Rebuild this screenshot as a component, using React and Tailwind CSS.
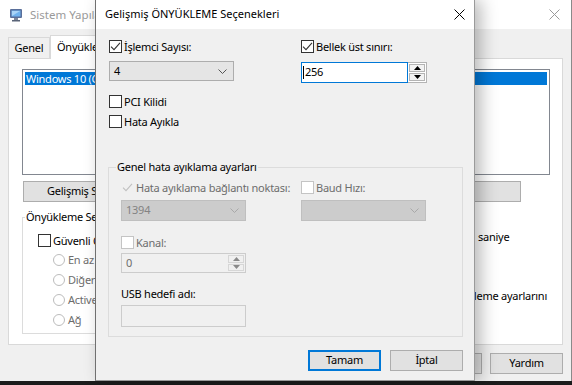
import React from 'react';

function Check({ checked, disabled }) {
  const box = disabled
    ? checked
      ? 'border-[#f0f0f0] bg-[#f0f0f0]'
      : 'border-[#c4c4c4] bg-white'
    : 'border-[#333333] bg-white';
  return (
    <span className={`w-[13px] h-[13px] border flex items-center justify-center shrink-0 ${box}`}>
      {checked && (
        <svg width="11" height="11" viewBox="0 0 11 11">
          <path d="M1 5.6 L4 8.6 L10 1.8" stroke={disabled ? '#c0c0c0' : '#333333'} strokeWidth="1.1" fill="none" />
        </svg>
      )}
    </span>
  );
}

function CheckRow({ label, checked, disabled, className = '' }) {
  return (
    <div className={`flex items-center h-[13px] gap-[2px] ${className}`}>
      <Check checked={checked} disabled={disabled} />
      <span className={`leading-[13px] whitespace-nowrap ${disabled ? 'text-[#6d6d6d]' : 'text-black'}`}>{label}</span>
    </div>
  );
}

function Chevron({ color }) {
  return (
    <svg width="9" height="5" viewBox="0 0 9 5">
      <path d="M0.5 0.5 L4.5 4.5 L8.5 0.5" stroke={color} strokeWidth="1" fill="none" />
    </svg>
  );
}

function Combo({ value, disabled, className = '' }) {
  return (
    <div
      className={`flex items-center justify-between border pl-[4px] pr-[6px] ${
        disabled ? 'bg-[#cccccc] border-[#bfbfbf] text-[#838383]' : 'bg-[#e5e5e5] border-[#adadad] text-black'
      } ${className}`}
    >
      <span>{value}</span>
      <Chevron color={disabled ? '#a8a8a8' : '#555555'} />
    </div>
  );
}

function Arrow({ up, color }) {
  return (
    <svg width="7" height="4" viewBox="0 0 7 4">
      <path d={up ? 'M0 4 L3.5 0 L7 4 Z' : 'M0 0 L3.5 4 L7 0 Z'} fill={color} />
    </svg>
  );
}

function Spinner({ disabled }) {
  const color = disabled ? '#8a8a8a' : '#000000';
  const part = disabled ? 'border-[#d6d6d6] bg-[#f0f0f0]' : 'border-[#b4b4b4] bg-[#f3f3f3]';
  return (
    <div className="w-[18px] flex flex-col gap-[1px] p-[1px]">
      <div className={`flex-1 border flex items-center justify-center ${part}`}>
        <Arrow up color={color} />
      </div>
      <div className={`flex-1 border flex items-center justify-center ${part}`}>
        <Arrow color={color} />
      </div>
    </div>
  );
}

function Btn({ label, primary, className = '' }) {
  return (
    <div
      className={`h-[21px] w-[73px] flex items-center justify-center bg-[#e1e1e1] text-black ${
        primary ? 'border-2 border-[#0078d7]' : 'border border-[#adadad]'
      } ${className}`}
    >
      {label}
    </div>
  );
}

function Radio({ label }) {
  return (
    <div className="flex items-center h-[13px] gap-[3px]">
      <span className="w-[12px] h-[12px] rounded-full border border-[#bcbcbc] bg-white shrink-0" />
      <span className="text-[#6d6d6d] leading-[13px] whitespace-nowrap">{label}</span>
    </div>
  );
}

function MonitorIcon() {
  return (
    <svg width="14" height="14" viewBox="0 0 14 14">
      <rect x="1" y="1" width="12" height="9" rx="1" fill="#5a6f9a" />
      <rect x="2.5" y="2.5" width="9" height="6" fill="#6fb2ee" />
      <path d="M3 3 L11 3 L3 8 Z" fill="#a9d4f7" />
      <rect x="5" y="10" width="4" height="2" fill="#7d8799" />
      <rect x="3" y="12" width="8" height="1.5" fill="#5a6478" />
    </svg>
  );
}

function CloseX({ color }) {
  return (
    <svg width="11" height="11" viewBox="0 0 11 11">
      <path d="M0.5 0.5 L10.5 10.5 M10.5 0.5 L0.5 10.5" stroke={color} strokeWidth="1" />
    </svg>
  );
}

export default function App() {
  return (
    <div className="w-[572px] h-[385px] bg-[#1c1c1c] relative overflow-hidden font-['Noto_Sans',sans-serif] text-[11px] tracking-[-0.25px]">
      {/* background window: Sistem Yapılandırması */}
      <div className="w-[572px] h-[381px] bg-[#f0f0f0] border-r border-[#8a8a8a] flex flex-col">
        <div className="h-[29px] bg-white flex items-center shrink-0">
          <div className="ml-[9px] mr-[7px]">
            <MonitorIcon />
          </div>
          <span className="text-[11.5px] tracking-normal text-[#9a9a9a]">Sistem Yapılandırması</span>
          <div className="ml-auto mr-[11px]">
            <CloseX color="#9a9a9a" />
          </div>
        </div>

        <div className="flex items-end pl-[8px] mt-[6px] h-[23px]">
          <div className="w-[42px] h-[21px] border border-b-0 border-[#d9d9d9] flex items-center justify-center">Genel</div>
          <div className="relative w-[78px] h-[24px] -mb-[1px] bg-white border border-b-0 border-[#d9d9d9] flex items-center pl-[6px]">
            Önyükleme
          </div>
        </div>

        <div className="ml-[8px] mr-[8px] h-[287px] bg-white border border-[#d9d9d9] flex flex-col">
          <div className="ml-[13px] mt-[10px] w-[528px] h-[106px] border border-[#828790] p-[2px]">
            <div className="h-[13px] bg-[#0078d7] text-white leading-[13px] pl-[1px] whitespace-nowrap overflow-hidden">
              Windows 10 (C:\WINDOWS) : Geçerli işletim sistemi; Varsayılan işletim sistemi
            </div>
          </div>

          <div className="flex ml-[14px] mt-[6px] gap-[8px]">
            <div className="w-[150px] h-[21px] bg-[#e1e1e1] border border-[#adadad] flex items-center pl-[23px] whitespace-nowrap">
              Gelişmiş Seçenekler...
            </div>
            <div className="w-[192px] h-[21px] bg-[#e1e1e1] border border-[#adadad] flex items-center justify-center whitespace-nowrap">
              Varsayılan olarak ayarla
            </div>
            <div className="w-[140px] h-[21px] bg-[#e1e1e1] border border-[#adadad] flex items-center justify-center">Sil</div>
          </div>

          <div className="flex mt-[15px]">
            <div className="ml-[13px] w-[280px] h-[117px] border border-[#dcdcdc] flex flex-col shrink-0">
              <span className="-mt-[9px] ml-[2px] px-[1px] bg-white w-fit leading-[16px]">Önyükleme Seçenekleri</span>
              <div className="ml-[15px] mt-[9px] flex flex-col">
                <CheckRow label="Güvenli Önyükleme" />
                <div className="ml-[15px] mt-[6px] flex flex-col gap-[7px]">
                  <Radio label="En az" />
                  <Radio label="Diğer kabuk" />
                  <Radio label="Active Directory onarımı" />
                  <Radio label="Ağ" />
                </div>
              </div>
            </div>
            <div className="ml-[18px] w-[228px] flex flex-col">
              <div className="mt-[10px] flex items-center h-[20px] leading-[16px]">
                <span className="w-[78px]">Zaman aşımı:</span>
                <span className="ml-[4px] w-[69px] h-[20px] border border-[#7a7a7a] bg-white pl-[3px]">30</span>
                <span className="ml-[7px]">saniye</span>
              </div>
              <div className="mt-[41px] leading-[16px] text-right pr-[1px] whitespace-nowrap">Tüm önyükleme ayarlarını</div>
              <div className="leading-[16px] pl-[60px] whitespace-nowrap">kalıcı yap</div>
            </div>
          </div>
        </div>

        <div className="flex justify-end gap-[8px] mt-[8px] mr-[8px]">
          <Btn label="Tamam" />
          <Btn label="İptal" />
          <Btn label="Uygula" />
          <Btn label="Yardım" />
        </div>
      </div>

      {/* dialog: Gelişmiş ÖNYÜKLEME Seçenekleri */}
      <div className="absolute left-[95px] top-0 w-[380px] h-[381px] bg-[#f0f0f0] border border-t-0 border-l-[#707070] border-r-[#9a9a9a] border-b-[#9a9a9a] shadow-[6px_0_16px_rgba(0,0,0,0.28)] flex flex-col">
        <div className="h-[29px] bg-white flex items-center shrink-0">
          <span className="ml-[9px] text-[11px] tracking-normal text-black">Gelişmiş ÖNYÜKLEME Seçenekleri</span>
          <div className="ml-auto mr-[9px]">
            <CloseX color="#000000" />
          </div>
        </div>

        <div className="pl-[13px] pr-[11px] pt-[11px] flex flex-col">
          <div className="flex">
            <div className="w-[192px] flex flex-col">
              <CheckRow label="İşlemci Sayısı:" checked />
              <Combo value="4" className="mt-[8px] w-[125px] h-[20px]" />
              <CheckRow label="PCI Kilidi" className="mt-[14px]" />
              <CheckRow label="Hata Ayıkla" className="mt-[7px]" />
            </div>
            <div className="flex flex-col">
              <CheckRow label="Bellek üst sınırı:" checked />
              <div className="mt-[9px] flex h-[21px] w-[126px]">
                <div className="flex-1 border border-[#0078d7] bg-white flex items-center pl-[1px]">
                  <span className="w-[1px] h-[13px] bg-black" />
                  <span className="ml-[1px]">256</span>
                </div>
                <div className="border border-l-0 border-[#b4b4b4] bg-white flex">
                  <Spinner />
                </div>
              </div>
            </div>
          </div>

          <div className="-ml-[1px] mt-[39px] h-[170px] border border-[#dcdcdc] flex flex-col">
            <span className="-mt-[9px] ml-[7px] px-[1px] bg-[#f0f0f0] w-fit leading-[16px]">Genel hata ayıklama ayarları</span>
            <div className="pl-[12px] mt-[6px] flex">
              <div className="w-[180px] flex flex-col">
                <CheckRow label="Hata ayıklama bağlantı noktası:" checked disabled />
                <Combo value="1394" disabled className="mt-[6px] w-[125px] h-[21px]" />
                <CheckRow label="Kanal:" disabled className="mt-[15px]" />
                <div className="mt-[4px] w-[125px] h-[20px] border border-[#cccccc] bg-[#f0f0f0] flex">
                  <span className="flex-1 pl-[4px] text-[#6d6d6d] leading-[18px]">0</span>
                  <Spinner disabled />
                </div>
                <span className="mt-[13px] leading-[16px] text-black">USB hedefi adı:</span>
                <div className="mt-[3px] w-[125px] h-[22px] border border-[#cccccc] bg-[#f0f0f0]" />
              </div>
              <div className="flex flex-col">
                <CheckRow label="Baud Hızı:" disabled />
                <Combo value="" disabled className="mt-[6px] w-[125px] h-[21px]" />
              </div>
            </div>
          </div>

          <div className="flex justify-end gap-[9px] mt-[13px]">
            <Btn label="Tamam" primary />
            <Btn label="İptal" />
          </div>
        </div>
      </div>
    </div>
  );
}
